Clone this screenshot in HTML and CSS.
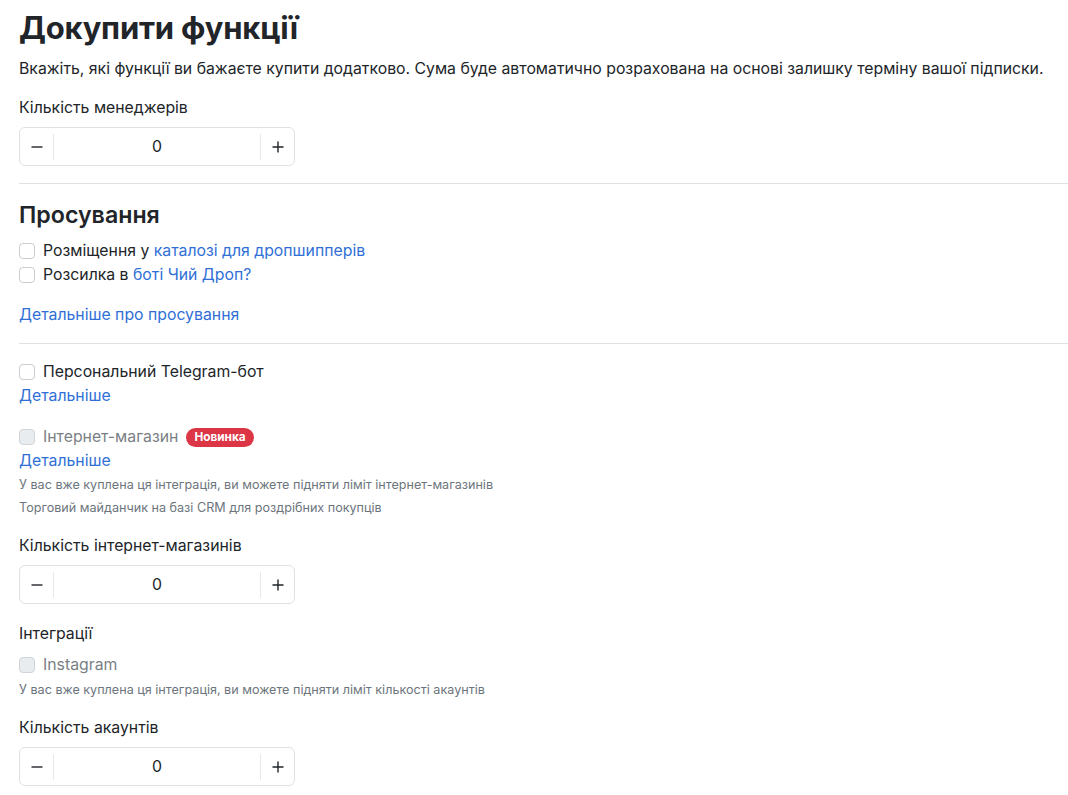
FILE: index.html
```html
<!DOCTYPE html>
<html lang="uk">
<head>
<meta charset="utf-8">
<link rel="stylesheet" href="styles.css">
</head>
<body>
<main class="page">
  <h1 class="title">Докупити функції</h1>
  <p class="lead">Вкажіть, які функції ви бажаєте купити додатково. Сума буде автоматично розрахована на основі залишку терміну вашої підписки.</p>

  <div class="field">
    <div class="field-label">Кількість менеджерів</div>
    <div class="stepper">
      <button class="step-btn" aria-label="minus"><svg viewBox="0 0 12 12" width="12" height="12"><path d="M0.5 6H11.5" stroke="#212529" stroke-width="1.4"/></svg></button>
      <span class="step-sep"></span>
      <span class="step-value">0</span>
      <span class="step-sep"></span>
      <button class="step-btn" aria-label="plus"><svg viewBox="0 0 12 12" width="12" height="12"><path d="M0.5 6H11.5M6 0.5V11.5" stroke="#212529" stroke-width="1.4"/></svg></button>
    </div>
  </div>

  <hr class="rule rule-first">

  <h2 class="section-title">Просування</h2>
  <label class="check"><span class="box"></span><span>Розміщення у <a class="link" href="#">каталозі для дропшипперів</a></span></label>
  <label class="check"><span class="box"></span><span>Розсилка в <a class="link" href="#">боті Чий Дроп?</a></span></label>
  <a class="link more-promo" href="#">Детальніше про просування</a>

  <hr class="rule rule-second">

  <label class="check"><span class="box"></span><span>Персональний Telegram-бот</span></label>
  <a class="link block-link" href="#">Детальніше</a>

  <label class="check check-disabled shop"><span class="box"></span><span>Інтернет-магазин</span><span class="badge">Новинка</span></label>
  <a class="link block-link" href="#">Детальніше</a>
  <p class="note note-first">У вас вже куплена ця інтеграція, ви можете підняти ліміт інтернет-магазинів</p>
  <p class="note">Торговий майданчик на базі CRM для роздрібних покупців</p>

  <div class="field field-shops">
    <div class="field-label">Кількість інтернет-магазинів</div>
    <div class="stepper">
      <button class="step-btn" aria-label="minus"><svg viewBox="0 0 12 12" width="12" height="12"><path d="M0.5 6H11.5" stroke="#212529" stroke-width="1.4"/></svg></button>
      <span class="step-sep"></span>
      <span class="step-value">0</span>
      <span class="step-sep"></span>
      <button class="step-btn" aria-label="plus"><svg viewBox="0 0 12 12" width="12" height="12"><path d="M0.5 6H11.5M6 0.5V11.5" stroke="#212529" stroke-width="1.4"/></svg></button>
    </div>
  </div>

  <div class="field-label integ">Інтеграції</div>
  <label class="check check-disabled insta"><span class="box"></span><span>Instagram</span></label>
  <p class="note note-insta">У вас вже куплена ця інтеграція, ви можете підняти ліміт кількості акаунтів</p>

  <div class="field field-acc">
    <div class="field-label">Кількість акаунтів</div>
    <div class="stepper">
      <button class="step-btn" aria-label="minus"><svg viewBox="0 0 12 12" width="12" height="12"><path d="M0.5 6H11.5" stroke="#212529" stroke-width="1.4"/></svg></button>
      <span class="step-sep"></span>
      <span class="step-value">0</span>
      <span class="step-sep"></span>
      <button class="step-btn" aria-label="plus"><svg viewBox="0 0 12 12" width="12" height="12"><path d="M0.5 6H11.5M6 0.5V11.5" stroke="#212529" stroke-width="1.4"/></svg></button>
    </div>
  </div>
</main>
</body>
</html>
```
FILE: styles.css
```css
* { box-sizing: border-box; }
html, body { margin: 0; padding: 0; background: #fff; }
body {
  font-family: Inter, "Noto Sans", "DejaVu Sans", sans-serif;
  color: #212529;
  font-size: 15.8px;
  line-height: 24px;
}
.page {
  padding: 8px 0 20px 19px;
  display: flex;
  flex-direction: column;
  align-items: flex-start;
}
.title {
  margin: 0;
  font-size: 31px;
  line-height: 40px;
  font-weight: 700;
  letter-spacing: -0.2px;
}
.lead {
  margin: 9px 0 0;
}
.field { margin-top: 15px; display: flex; flex-direction: column; }
.field-label { line-height: 24px; }
.stepper {
  margin-top: 7px;
  width: 276px;
  height: 39px;
  border: 1px solid #dee2e6;
  border-radius: 6px;
  display: flex;
  align-items: center;
}
.step-btn {
  width: 33px;
  height: 100%;
  border: 0;
  background: transparent;
  padding: 0;
  display: flex;
  align-items: center;
  justify-content: center;
}
.step-btn svg { display: block; }
.step-sep {
  width: 1px;
  height: 26px;
  background: #e6e8eb;
}
.step-value {
  flex: 1;
  text-align: center;
}
.rule {
  align-self: stretch;
  border: 0;
  border-top: 1px solid #dee2e6;
  margin: 0;
}
.rule-first { margin-top: 17px; }
.section-title {
  margin: 17px 0 10px;
  font-size: 23.2px;
  line-height: 28px;
  font-weight: 600;
}
.check {
  display: flex;
  align-items: center;
  gap: 8px;
  line-height: 24px;
}
.box {
  width: 16px;
  height: 16px;
  border: 1px solid #c9ced4;
  border-radius: 4px;
  background: #fff;
  flex: none;
}
.check-disabled { color: #7a7f85; }
.check-disabled .box { background: #e9ecef; border-color: #ced4da; }
.link { color: #2f6fd6; text-decoration: none; }
.more-promo { margin-top: 16px; }
.rule-second { margin-top: 16px; }
.rule-second + .check { margin-top: 16px; }
.block-link { line-height: 24px; }
.shop { margin-top: 17px; }
.badge {
  background: #dc3545;
  color: #fff;
  font-size: 11.8px;
  font-weight: 700;
  line-height: 19px;
  padding: 0 8px;
  border-radius: 10px;
}
.note {
  margin: 0;
  font-size: 12.6px;
  line-height: 23px;
  color: #6c757d;
}
.note-first { margin-top: 0; }
.field-shops { margin-top: 15px; }
.integ { margin-top: 18px; }
.insta { margin-top: 7px; }
.note-insta { margin-top: 1px; }
.field-acc { margin-top: 15px; }
```
